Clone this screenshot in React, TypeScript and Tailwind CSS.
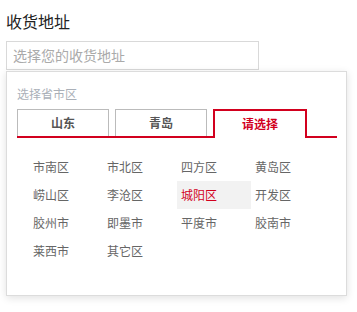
import React from "react";

const items = [
  "市南区", "市北区", "四方区", "黄岛区",
  "崂山区", "李沧区", "城阳区", "开发区",
  "胶州市", "即墨市", "平度市", "胶南市",
  "莱西市", "其它区",
];

export default function App() {
  return (
    <div
      className="w-[357px] h-[312px] bg-white pl-[6px] pt-[10px]"
      style={{ fontFamily: '"Microsoft YaHei", "Noto Sans CJK SC", sans-serif' }}
    >
      <div className="text-[16px] leading-[22px] text-[#222]">收货地址</div>
      <div className="mt-[9px] w-[253px] h-[29px] border border-[#d9d9d9] flex items-center pl-[6px] text-[14px] text-[#aaa]">
        选择您的收货地址
      </div>
      <div className="mt-[1px] w-[341px] h-[225px] border border-[#dcdcdc] bg-white shadow-[0_2px_8px_rgba(0,0,0,0.12)] px-[10px] pt-[14px]">
        <div className="text-[12px] leading-[16px] text-[#aab0b8]">选择省市区</div>
        <div className="mt-[7px] w-[320px] h-[29px] flex items-start gap-[6px] border-b-2 border-[#d2001e]">
          <div className="w-[92px] h-[27px] border border-b-0 border-[#bbb] flex items-center justify-center text-[12px] font-bold text-[#555]">
            山东
          </div>
          <div className="w-[92px] h-[27px] border border-b-0 border-[#bbb] flex items-center justify-center text-[12px] font-bold text-[#555]">
            青岛
          </div>
          <div className="w-[94px] h-[29px] border-2 border-b-0 border-[#d2001e] bg-white flex items-center justify-center text-[12px] font-bold text-[#d2001e] pb-[1px]">
            请选择
          </div>
        </div>
        <div className="mt-[15px] pl-[12px] grid grid-cols-[repeat(4,74px)] auto-rows-[28px]">
          {items.map((t) => (
            <div
              key={t}
              className={
                t === "城阳区"
                  ? "flex items-center pl-[4px] text-[12px] bg-[#f2f2f2] text-[#d2001e]"
                  : "flex items-center pl-[4px] text-[12px] text-[#666]"
              }
            >
              {t}
            </div>
          ))}
        </div>
      </div>
    </div>
  );
}
